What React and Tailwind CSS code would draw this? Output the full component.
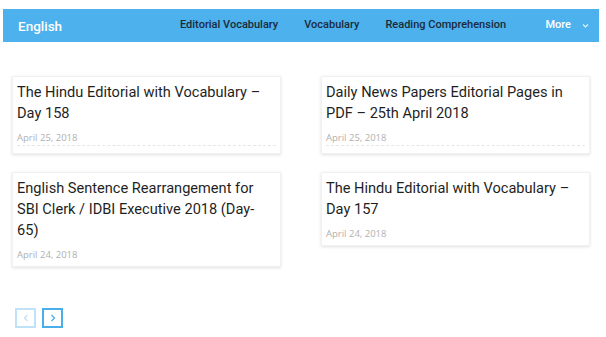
import React from 'react';

const posts = [
  { title: 'The Hindu Editorial with Vocabulary – Day 158', date: 'April 25, 2018', top: true },
  { title: 'Daily News Papers Editorial Pages in PDF – 25th April 2018', date: 'April 25, 2018', top: true },
  { title: 'English Sentence Rearrangement for SBI Clerk / IDBI Executive 2018 (Day-65)', date: 'April 24, 2018' },
  { title: 'The Hindu Editorial with Vocabulary – Day 157', date: 'April 24, 2018' },
];

const navItems = ['Editorial Vocabulary', 'Vocabulary', 'Reading Comprehension'];

const PostCard = ({ post }) => (
  <div className="bg-white border border-[#f1f1f1] shadow-[0_1px_3px_rgba(0,0,0,0.12)] px-[4px] pt-[5px]">
    <h3 className="text-[14.6px] leading-[21px] text-[#1f1f1f] font-normal pr-[4px]" style={{ fontFamily: 'Roboto, sans-serif' }}>
      {post.title}
    </h3>
    <div
      className="mt-[7px] text-[9.5px] leading-[14px] text-[#b0b0b0]"
      style={{ fontFamily: '"Open Sans", sans-serif' }}
    >
      {post.date}
    </div>
    {post.top ? (
      <div className="mb-[7px] border-b border-dashed border-[#e6e6e6]" />
    ) : (
      <div className="h-[4px]" />
    )}
  </div>
);

const App = () => {
  return (
    <div className="w-[606px] h-[337px] bg-white overflow-hidden" style={{ fontFamily: 'Roboto, sans-serif' }}>
      <div className="ml-[3px] mt-[9px] w-[596px] h-[33px] bg-[#4cb1ec] flex items-center">
        <div className="w-[177px] pl-[15px] pt-[1px] text-[13.5px] font-medium text-white">English</div>
        <nav className="flex items-center gap-[26px] text-[11px] font-medium text-[#1b2b3b]">
          {navItems.map((item) => (
            <span key={item}>{item}</span>
          ))}
        </nav>
        <div className="ml-auto flex items-center pr-[10px] text-[11px] font-medium text-white">
          <span>More</span>
          <svg className="ml-[11px]" width="7" height="6" viewBox="0 0 7 6" fill="none">
            <path d="M1 1.5 L3.5 4 L6 1.5" stroke="#e6f4fd" strokeWidth="1.1" />
          </svg>
        </div>
      </div>

      <div className="mt-[34px] ml-[12px] grid grid-cols-[269px_269px] gap-x-[40px] gap-y-[18px] items-start">
        {posts.map((post) => (
          <PostCard key={post.title} post={post} />
        ))}
      </div>

      <div className="ml-[15px] mt-[41px] flex gap-[6px]">
        <button className="w-[21px] h-[20px] border-2 border-[#bfe2f8] flex items-center justify-center">
          <svg width="6" height="8" viewBox="0 0 6 8" fill="none">
            <path d="M4.5 1 L1.5 4 L4.5 7" stroke="#bfe2f8" strokeWidth="1.3" />
          </svg>
        </button>
        <button className="w-[21px] h-[20px] border-2 border-[#4aaeea] flex items-center justify-center">
          <svg width="6" height="8" viewBox="0 0 6 8" fill="none">
            <path d="M1.5 1 L4.5 4 L1.5 7" stroke="#4aaeea" strokeWidth="1.3" />
          </svg>
        </button>
      </div>
    </div>
  );
};

export default App;
